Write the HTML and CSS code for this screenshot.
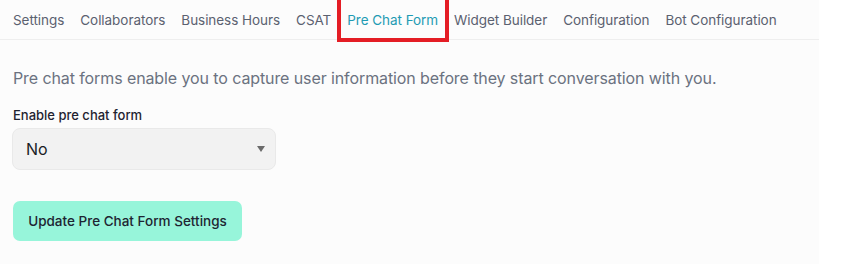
FILE: index.html
```html
<!DOCTYPE html>
<html>
<head>
<meta charset="utf-8">
<link rel="stylesheet" href="styles.css">
</head>
<body>
<div class="page">
  <nav class="tabs">
    <span class="tab">Settings</span>
    <span class="tab">Collaborators</span>
    <span class="tab">Business Hours</span>
    <span class="tab">CSAT</span>
    <span class="tab active">Pre Chat Form</span>
    <span class="tab">Widget Builder</span>
    <span class="tab">Configuration</span>
    <span class="tab">Bot Configuration</span>
  </nav>
  <div class="content">
    <p class="desc">Pre chat forms enable you to capture user information before they start conversation with you.</p>
    <label class="label">Enable pre chat form</label>
    <div class="select">
      <span>No</span>
      <span class="caret"></span>
    </div>
    <button class="btn">Update Pre Chat Form Settings</button>
  </div>
</div>
</body>
</html>
```
FILE: styles.css
```css
html, body {
  margin: 0;
  padding: 0;
  background: #ffffff;
}
body {
  font-family: Inter, "Noto Sans", sans-serif;
}
.page {
  width: 819px;
  height: 264px;
  background: #fcfcfc;
}
.tabs {
  display: flex;
  align-items: center;
  gap: 16px;
  height: 40px;
  padding: 0 13px;
  border-bottom: 1px solid #eeeeee;
  box-sizing: border-box;
}
.tab {
  font-size: 13.5px;
  color: #5b6170;
  white-space: nowrap;
  letter-spacing: -0.05px;
}
.tab.active {
  color: #1f9bb3;
  position: relative;
}
.tab.active::after {
  content: "";
  position: absolute;
  left: -10px;
  right: -11px;
  top: -16px;
  bottom: -14px;
  border: 4px solid #e41d25;
}
.content {
  padding: 28px 13px 0;
}
.desc {
  margin: 0 0 19px;
  font-size: 16px;
  color: #6b7280;
  letter-spacing: -0.1px;
}
.label {
  display: block;
  font-size: 13px;
  font-weight: 500;
  color: #1f2330;
  margin-bottom: 5px;
}
.select {
  display: flex;
  align-items: center;
  justify-content: space-between;
  width: 264px;
  height: 42px;
  margin-left: -1px;
  box-sizing: border-box;
  background: #f2f2f2;
  border: 1px solid #e9e9e9;
  border-radius: 8px;
  padding: 0 10px 0 13px;
  font-size: 16px;
  color: #1a1d26;
}
.caret {
  width: 0;
  height: 0;
  border-left: 4px solid transparent;
  border-right: 4px solid transparent;
  border-top: 6px solid #6b6b6b;
}
.btn {
  display: block;
  margin-top: 31px;
  width: 229px;
  height: 40px;
  background: #97f5da;
  border: none;
  border-radius: 7px;
  font-family: Inter, "Noto Sans", sans-serif;
  font-size: 13.5px;
  font-weight: 500;
  color: #1e2532;
  padding: 0;
}
```
